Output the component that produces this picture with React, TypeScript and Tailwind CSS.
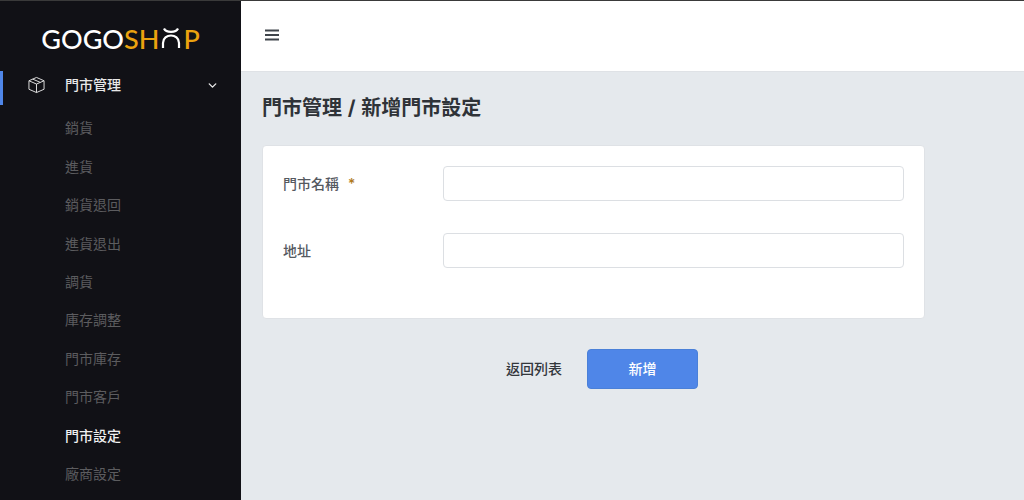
import { ChevronDown } from "lucide-react";

const CJK = "font-['Inter','Noto_Sans_CJK_TC',sans-serif]";

const SUB_ITEMS = [
  { label: "銷貨" },
  { label: "進貨" },
  { label: "銷貨退回" },
  { label: "進貨退出" },
  { label: "調貨" },
  { label: "庫存調整" },
  { label: "門市庫存" },
  { label: "門市客戶" },
  { label: "門市設定", active: true },
  { label: "廠商設定" },
];

function BoxIcon() {
  return (
    <svg width="17" height="18" viewBox="0 0 18 18" fill="none" stroke="#e5e5e5" strokeWidth="1" strokeLinejoin="round">
      <path d="M9 1 L17 4.5 V13.5 L9 17 L1 13.5 V4.5 Z" />
      <path d="M1 4.5 L9 8 L17 4.5 M9 8 V17" />
      <path d="M5 2.8 L13 6.2" />
    </svg>
  );
}

function HamburgerIcon() {
  return (
    <svg width="14" height="12" viewBox="0 0 14 12" fill="none" stroke="#3f444b" strokeWidth="2">
      <path d="M0 1.5 H14 M0 6 H14 M0 10.5 H14" />
    </svg>
  );
}

function Logo() {
  return (
    <div className="flex items-center justify-center font-['Lato',sans-serif] text-[27px] leading-none font-medium">
      <span className="text-white">GOGO</span>
      <span className="text-[#eba20f]">SH</span>
      <svg width="22" height="20" viewBox="0 0 22 20" fill="none" stroke="#ffffff" strokeWidth="2.2" className="mx-[1px]">
        <path d="M4 0.5 C6 5 16 5 18 0.5" />
        <path d="M3 20 V15 C3 5 19 5 19 15 V20" />
      </svg>
      <span className="text-[#eba20f]">P</span>
    </div>
  );
}

function Sidebar() {
  return (
    <aside className="flex w-[241px] shrink-0 flex-col overflow-hidden bg-[#111116]">
      <div className="flex h-[70px] items-center justify-center pt-[4px]">
        <Logo />
      </div>
      <div className="relative flex h-[34px] items-center pb-[6px] pl-[28px] pr-[22px] text-sm font-medium text-[#e8e8e8]">
        <span className="absolute bottom-0 left-0 top-0 w-[3px] bg-[#4f86e8]" />
        <BoxIcon />
        <span className="ml-[20px] flex-1">門市管理</span>
        <ChevronDown size={13} strokeWidth={2.6} />
      </div>
      <ul className="mt-[4px]">
        {SUB_ITEMS.map((item) => (
          <li
            key={item.label}
            className={`flex h-[38.45px] items-center pl-[65px] text-sm ${
              item.active ? "font-medium text-[#f0f0f0]" : "text-[#5c5c5f]"
            }`}
          >
            {item.label}
          </li>
        ))}
      </ul>
    </aside>
  );
}

function Field({ label, required, className }: { label: string; required?: boolean; className?: string }) {
  return (
    <div className={`flex items-center ${className ?? ""}`}>
      <label className="flex w-[160px] shrink-0 pt-[1px] text-sm font-medium text-[#55595f]">
        {label}
        {required && <span className="ml-[9px] text-[#b07a1c]">*</span>}
      </label>
      <input className="h-[35px] w-[461px] rounded border border-[#dcdfe3] bg-white outline-none" />
    </div>
  );
}

export default function App() {
  return (
    <div className={`flex h-[500px] w-[1024px] flex-col overflow-hidden ${CJK}`}>
      <div className="h-px shrink-0 bg-[#3a3a3a]" />
      <div className="flex min-h-0 flex-1">
        <Sidebar />
        <div className="flex min-w-0 flex-1 flex-col bg-[#e5e9ed]">
          <header className="flex h-[71px] shrink-0 items-center border-b border-[#dfe2e6] bg-white pb-[2px] pl-[24px]">
            <HamburgerIcon />
          </header>
          <main className="pl-[21px]">
            <h1 className="mt-[23px] text-[20px] leading-[26px] font-bold text-[#2f3338] [word-spacing:1px]">
              門市管理 / 新增門市設定
            </h1>
            <section className="mt-[24px] h-[174px] w-[663px] rounded border border-[#dfe2e6] bg-white pl-[20px] pt-[20px]">
              <Field label="門市名稱" required />
              <Field label="地址" className="mt-[32px]" />
            </section>
            <div className="mt-[30px] flex w-[663px] items-center justify-center pl-[17px]">
              <button type="button" className="text-sm font-medium text-[#33373c]">
                返回列表
              </button>
              <button
                type="button"
                className="ml-[25px] h-[40px] w-[111px] rounded border border-[#4a80d8] bg-[#4f86e8] text-sm font-medium text-white"
              >
                新增
              </button>
            </div>
          </main>
        </div>
      </div>
    </div>
  );
}
